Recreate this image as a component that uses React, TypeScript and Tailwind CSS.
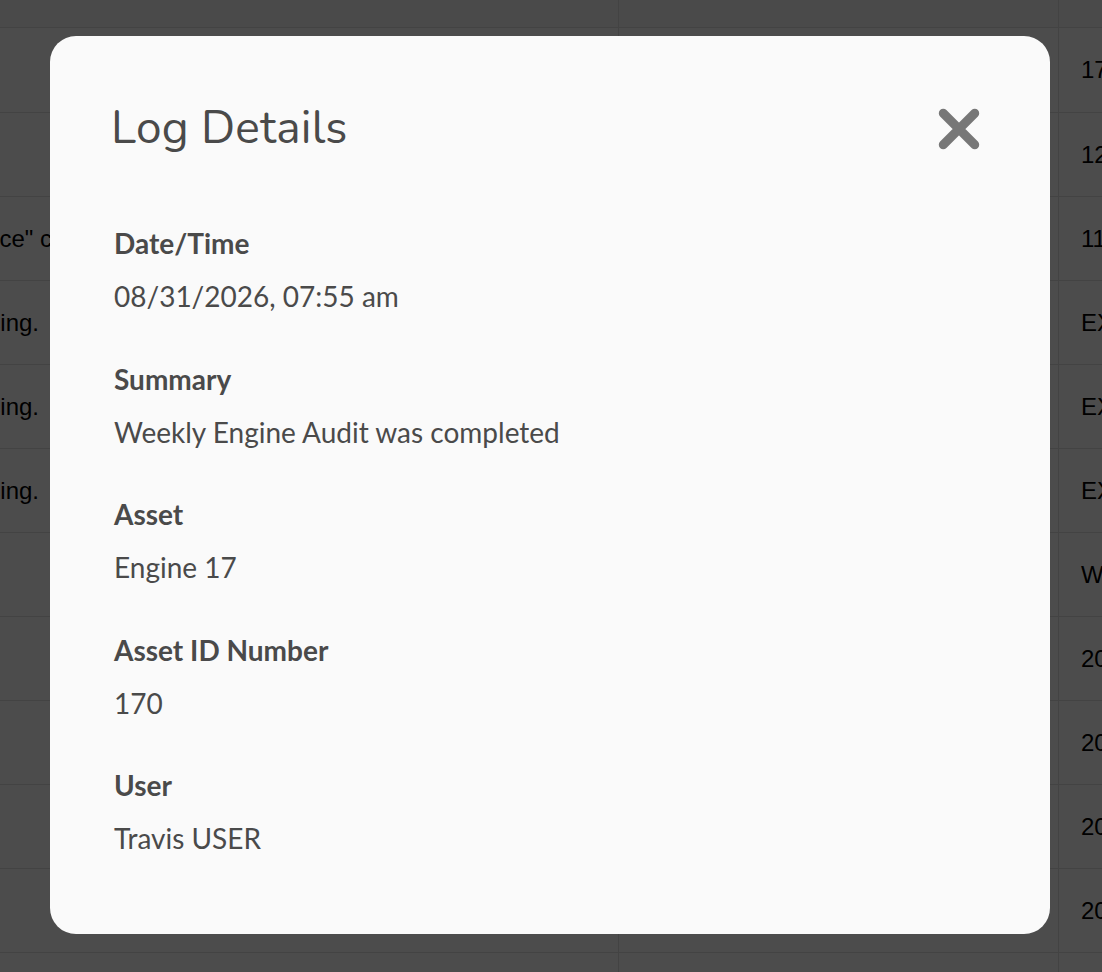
import React from "react";

const rows = [
  { left: "", right: "17" },
  { left: "", right: "12" },
  { left: "\"Service\" c", right: "11" },
  { left: "Engine needs servicing.", right: "EX" },
  { left: "Engine needs servicing.", right: "EX" },
  { left: "Engine needs servicing.", right: "EX" },
  { left: "", right: "W" },
  { left: "", right: "20" },
  { left: "", right: "20" },
  { left: "", right: "20" },
  { left: "", right: "20" },
  { left: "", right: "" },
];

const fields = [
  { label: "Date/Time", value: "08/31/2026, 07:55 am" },
  { label: "Summary", value: "Weekly Engine Audit was completed" },
  { label: "Asset", value: "Engine 17" },
  { label: "Asset ID Number", value: "170" },
  { label: "User", value: "Travis USER" },
];

export default function App() {
  return (
    <div className="relative h-[972px] w-[1102px] overflow-hidden bg-white font-['Liberation_Sans',sans-serif]">
      {/* table behind the dialog */}
      <div className="flex flex-col">
        <div className="flex h-[28px] border-b border-[#e0e0e0] bg-[#f7f7f7]">
          <div className="w-[619px] border-r border-[#e0e0e0]" />
          <div className="w-[440px] border-r border-[#e0e0e0]" />
          <div className="flex-1" />
        </div>
        {rows.map((r, i) => (
          <div
            key={i}
            className={`flex border-b border-[#e0e0e0] text-[24px] text-black ${i === 0 ? "h-[85px]" : "h-[84px]"}`}
          >
            <div
              className={`flex w-[619px] items-center justify-end overflow-hidden whitespace-nowrap border-r border-[#e0e0e0] ${
                i === 2 ? "pr-[566px]" : "pr-[579px]"
              }`}
            >
              {r.left}
            </div>
            <div className="w-[440px] border-r border-[#e0e0e0]" />
            <div className="flex flex-1 items-center overflow-hidden whitespace-nowrap pl-[22px]">{r.right}</div>
          </div>
        ))}
      </div>

      {/* overlay */}
      <div className="absolute inset-0 bg-black/70" />

      {/* dialog */}
      <div className="absolute left-[50px] top-[36px] h-[898px] w-[1000px] rounded-[26px] bg-[#fafafa] pl-[61px] pr-[70px] pt-[71px] text-[#4a4a4a] font-['Lato',sans-serif]">
        <div className="flex items-center justify-between">
          <h2 className="-mt-[2px] text-[46px] leading-none font-['Nunito','Lato',sans-serif] tracking-[0.2px]">Log Details</h2>
          <button className="-mr-[1px] flex h-[44px] w-[44px] items-center justify-center text-[#777777]">
            <svg width="42" height="42" viewBox="0 0 40 40" fill="none">
              <path d="M5 5L35 35M35 5L5 35" stroke="currentColor" strokeWidth="8.5" strokeLinecap="round" />
            </svg>
          </button>
        </div>
        <div className="mt-[74px] flex flex-col gap-[46.5px] pl-[3px]">
          {fields.map((f) => (
            <div key={f.label} className="flex flex-col gap-[17px]">
              <div className="text-[28px] leading-[36px] font-bold">{f.label}</div>
              <div className="text-[28px] leading-[36px]">{f.value}</div>
            </div>
          ))}
        </div>
      </div>
    </div>
  );
}
